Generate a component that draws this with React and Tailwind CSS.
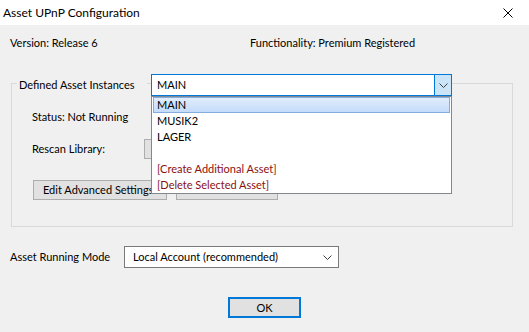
import React from "react";

const Chevron = ({ className = "" }) => (
  <svg width="9" height="5" viewBox="0 0 9 5" className={className}>
    <polyline points="0.5,0.5 4.5,4.5 8.5,0.5" fill="none" stroke="#404040" strokeWidth="1" />
  </svg>
);

export default function App() {
  const items = ["MAIN", "MUSIK2", "LAGER", "", "[Create Additional Asset]", "[Delete Selected Asset]"];
  return (
    <div
      className="w-[529px] h-[332px] bg-[#f0f0f0] text-[11px] leading-[16px] text-black flex flex-col overflow-hidden"
      style={{ fontFamily: 'Lato, "Noto Sans", sans-serif' }}
    >
      {/* Title bar */}
      <div className="h-[25px] bg-white flex items-center justify-between pl-[3px] pr-[16px] shrink-0">
        <span className="text-[12px]">Asset UPnP Configuration</span>
        <svg width="10" height="10" viewBox="0 0 10 10">
          <path d="M0.5 0.5 L9.5 9.5 M9.5 0.5 L0.5 9.5" stroke="#000" strokeWidth="1" />
        </svg>
      </div>

      {/* Version row */}
      <div className="flex items-center h-[16px] mt-[10px]">
        <span className="ml-[10px] w-[240px]">Version: Release 6</span>
        <span>Functionality: Premium Registered</span>
      </div>

      {/* Group box */}
      <div className="ml-[11px] w-[502px] h-[144px] mt-[32px] border border-[#d9d9d9] flex flex-col shrink-0">
        <div className="flex items-center h-[22px] -mt-[10px]">
          <span className="ml-[5px] w-[130px] pl-[2px] bg-[#f0f0f0] whitespace-nowrap">Defined Asset Instances</span>
          <div className="relative ml-[4px] w-[301px] h-[22px]">
            <div className="w-full h-full border border-[#0078d7] bg-white flex items-center">
              <span className="flex-1 pl-[5px]">MAIN</span>
              <div className="w-[17px] h-full border-l border-[#0078d7] bg-[#cce4f7] flex items-center justify-center">
                <Chevron />
              </div>
            </div>
            <div className="absolute left-0 top-full w-[301px] h-[98px] bg-white border border-[#828790] z-10 flex flex-col">
              {items.map((it, i) =>
                i === 0 ? (
                  <div
                    key={i}
                    className="h-[16px] mx-[1px] border border-[#84acdd] bg-gradient-to-b from-[#e0edfc] to-[#c4dcfa] flex items-center pl-[3px]"
                  >
                    {it}
                  </div>
                ) : (
                  <div
                    key={i}
                    className={`h-[16px] flex items-center pl-[5px] ${i >= 4 ? "text-[#8b1010]" : ""}`}
                  >
                    {it}
                  </div>
                )
              )}
            </div>
          </div>
        </div>

        <div className="ml-[20px] mt-[13px] h-[16px] flex items-center">Status: Not Running</div>

        <div className="flex items-center h-[20px] mt-[14px]">
          <span className="ml-[20px] w-[112px]">Rescan Library:</span>
          <div className="w-[100px] h-[20px] border border-[#adadad] bg-[#e1e1e1]" />
        </div>

        <div className="flex items-center mt-[21px]">
          <div className="ml-[21px] w-[134px] h-[20px] border border-[#adadad] bg-[#e1e1e1] flex items-center pl-[9px] whitespace-nowrap overflow-hidden">
            Edit Advanced Settings
          </div>
          <div className="ml-[9px] w-[102px] h-[20px] border border-[#adadad] bg-[#e1e1e1]" />
        </div>
      </div>

      {/* Running mode */}
      <div className="flex items-center h-[22px] mt-[19px]">
        <span className="ml-[10px] w-[114px] whitespace-nowrap">Asset Running Mode</span>
        <div className="w-[215px] h-[22px] border border-[#7a7a7a] bg-white flex items-center justify-between pl-[8px] pr-[6px]">
          <span>Local Account (recommended)</span>
          <Chevron />
        </div>
      </div>

      {/* OK */}
      <div className="ml-[228px] mt-[29px] w-[73px] h-[21px] border-2 border-[#0078d7] bg-[#e1e1e1] flex items-center justify-center">
        OK
      </div>
    </div>
  );
}
